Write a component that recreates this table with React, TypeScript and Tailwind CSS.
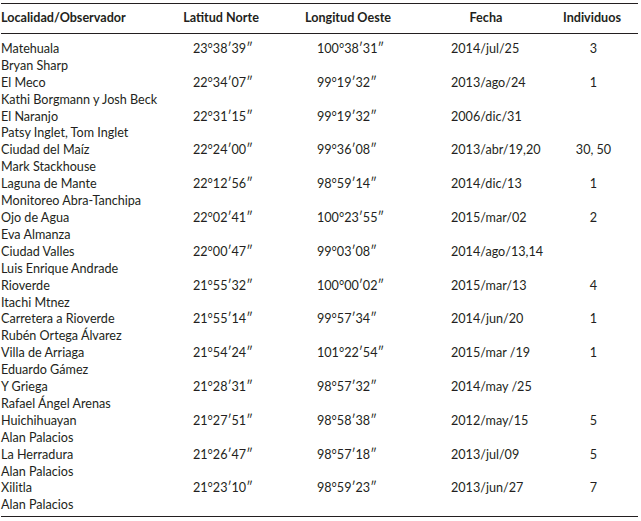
const ROWS = [
  { place: "Matehuala", obs: "Bryan Sharp", lat: "23°38′39″", lon: "100°38′31″", date: "2014/jul/25", n: "3" },
  { place: "El Meco", obs: "Kathi Borgmann y Josh Beck", lat: "22°34′07″", lon: "99°19′32″", date: "2013/ago/24", n: "1" },
  { place: "El Naranjo", obs: "Patsy Inglet, Tom Inglet", lat: "22°31′15″", lon: "99°19′32″", date: "2006/dic/31", n: "" },
  { place: "Ciudad del Maíz", obs: "Mark Stackhouse", lat: "22°24′00″", lon: "99°36′08″", date: "2013/abr/19,20", n: "30, 50" },
  { place: "Laguna de Mante", obs: "Monitoreo Abra-Tanchipa", lat: "22°12′56″", lon: "98°59′14″", date: "2014/dic/13", n: "1" },
  { place: "Ojo de Agua", obs: "Eva Almanza", lat: "22°02′41″", lon: "100°23′55″", date: "2015/mar/02", n: "2" },
  { place: "Ciudad Valles", obs: "Luis Enrique Andrade", lat: "22°00′47″", lon: "99°03′08″", date: "2014/ago/13,14", n: "" },
  { place: "Rioverde", obs: "Itachi Mtnez", lat: "21°55′32″", lon: "100°00′02″", date: "2015/mar/13", n: "4" },
  { place: "Carretera a Rioverde", obs: "Rubén Ortega Álvarez", lat: "21°55′14″", lon: "99°57′34″", date: "2014/jun/20", n: "1" },
  { place: "Villa de Arriaga", obs: "Eduardo Gámez", lat: "21°54′24″", lon: "101°22′54″", date: "2015/mar /19", n: "1" },
  { place: "Y Griega", obs: "Rafael Ángel Arenas", lat: "21°28′31″", lon: "98°57′32″", date: "2014/may /25", n: "" },
  { place: "Huichihuayan", obs: "Alan Palacios", lat: "21°27′51″", lon: "98°58′38″", date: "2012/may/15", n: "5" },
  { place: "La Herradura", obs: "Alan Palacios", lat: "21°26′47″", lon: "98°57′18″", date: "2013/jul/09", n: "5" },
  { place: "Xilitla", obs: "Alan Palacios", lat: "21°23′10″", lon: "98°59′23″", date: "2013/jun/27", n: "7" },
];

// column grid shared by header and rows
const GRID = "grid grid-cols-[160px_120px_134px_142px_70px]";

export default function App() {
  return (
    <div className="w-[641px] h-[521px] bg-white pt-[3px] pl-px text-[#231f20] font-['Lato','Open_Sans',sans-serif] text-[12.6px] leading-[16.9px]">
      <div className="w-[637px] border-t border-b border-[#231f20]">
        <div className={`${GRID} py-[6px] border-b border-[#231f20] font-bold whitespace-nowrap`}>
          <div>Localidad/Observador</div>
          <div className="text-center">Latitud Norte</div>
          <div className="text-center">Longitud Oeste</div>
          <div className="text-center">Fecha</div>
          <div className="text-center">Individuos</div>
        </div>
        <div className="pt-[7px] pb-[2px]">
          {ROWS.map((r, i) => (
            <div key={i} className="whitespace-nowrap">
              <div className={GRID}>
                <div>{r.place}</div>
                <div className="pl-[32px]">{r.lat}</div>
                <div className="pl-[36px]">{r.lon}</div>
                <div className="pl-[36px]">{r.date}</div>
                <div className="text-center pl-[3px]">{r.n}</div>
              </div>
              <div>{r.obs}</div>
            </div>
          ))}
        </div>
      </div>
    </div>
  );
}
